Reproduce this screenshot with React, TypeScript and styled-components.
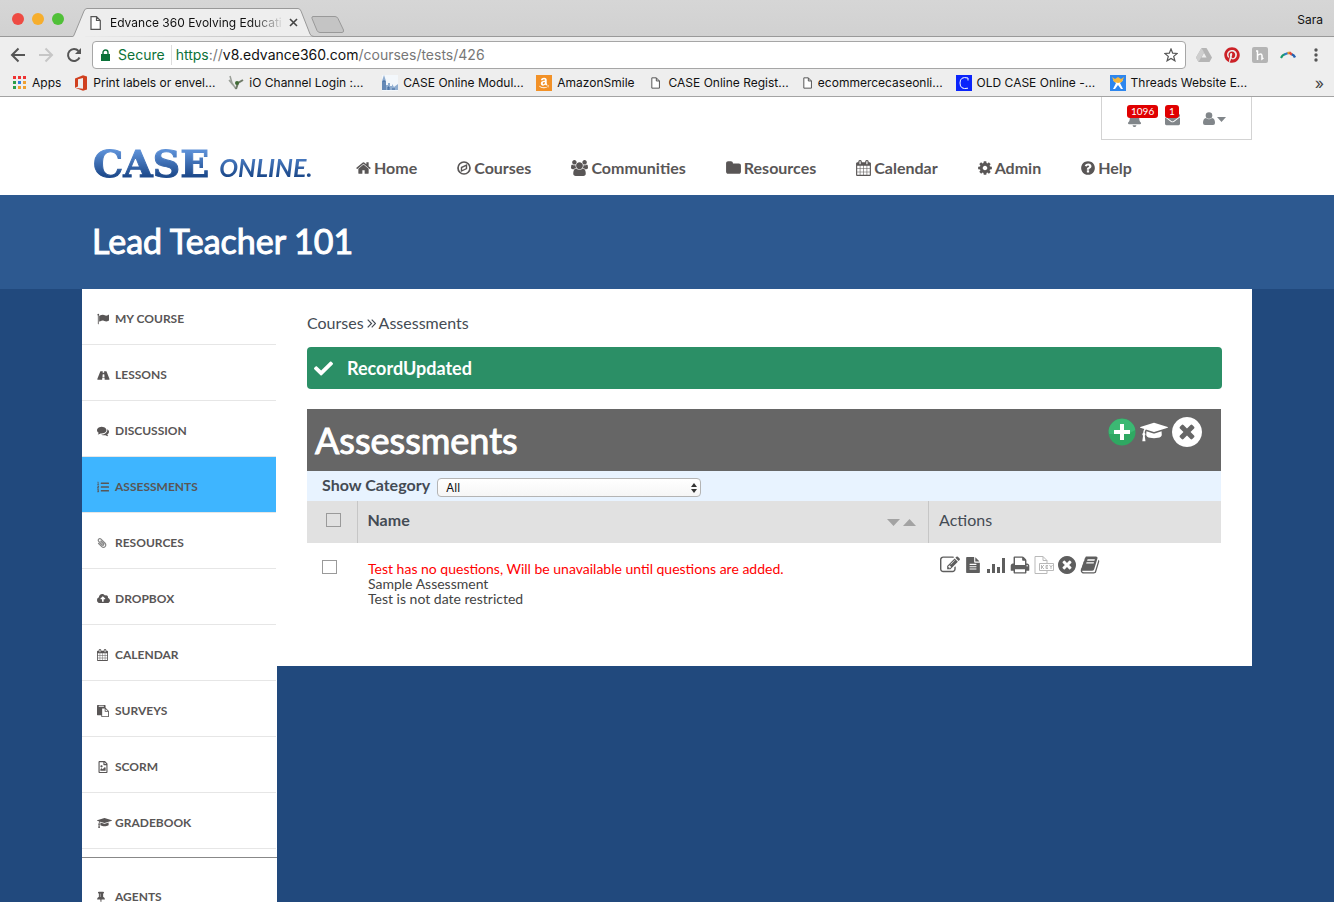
import React from "react";
import styled, { createGlobalStyle, css } from "styled-components";
import { FaListOl, FaPaperclip, FaCloudUploadAlt, FaRegFileImage, FaCheck, FaBell, FaEnvelope, FaPinterest, FaAmazon } from "react-icons/fa";

const GlobalStyle = createGlobalStyle`
  *, *::before, *::after { box-sizing: border-box; }
  body { margin: 0; background: #21497d; font-family: Lato, sans-serif; color: #444b54; }
  h1, h2, p, ul { margin: 0; padding: 0; }
  ul { list-style: none; }
  a { color: inherit; text-decoration: none; }
  button { border: 0; padding: 0; background: none; font: inherit; color: inherit; }
`;

/* Semi-bold headings: the regular cut, thickened by a thin outline of its own colour. */
const thick = css`
  font-weight: 400;
  -webkit-text-stroke: 1px currentColor;
`;

/* ---------- icons ---------- */

const paths = {
  home: "M1472 992v480q0 26-19 45t-45 19h-384v-384h-256v384h-384q-26 0-45-19t-19-45v-480q0-1 .5-3t.5-3l575-474 575 474q1 2 1 6zm223-69l-62 74q-8 9-21 11h-3q-13 0-21-7l-692-577-692 577q-12 8-24 7-13-2-21-11l-62-74q-8-10-7-23.5t11-21.5l719-599q32-26 76-26t76 26l244 204v-195q0-14 9-23t23-9h192q14 0 23 9t9 23v408l219 182q10 8 11 21.5t-7 23.5z",
  users: "M529 896q-162 5-265 128h-134q-82 0-138-40.5t-56-118.5q0-353 124-353 6 0 43.5 21t97.5 42.5 119 21.5q67 0 133-23-5 37-5 66 0 139 81 256zm1071 637q0 120-73 189.5t-194 69.5h-874q-121 0-194-69.5t-73-189.5q0-53 3.5-103.5t14-109 26.5-108.5 43-97.5 62-81 85.5-53.5 111.5-20q10 0 43 21.5t73 48 107 48 135 21.5 135-21.5 107-48 73-48 43-21.5q61 0 111.5 20t85.5 53.5 62 81 43 97.5 26.5 108.5 14 109 3.5 103.5zm-1024-1277q0 106-75 181t-181 75-181-75-75-181 75-181 181-75 181 75 75 181zm704 384q0 159-112.5 271.5t-271.5 112.5-271.5-112.5-112.5-271.5 112.5-271.5 271.5-112.5 271.5 112.5 112.5 271.5zm576 225q0 78-56 118.5t-138 40.5h-134q-103-123-265-128 81-117 81-256 0-29-5-66 66 23 133 23 59 0 119-21.5t97.5-42.5 43.5-21q124 0 124 353zm-128-609q0 106-75 181t-181 75-181-75-75-181 75-181 181-75 181 75 75 181z",
  folder: "M1728 608v704q0 92-66 158t-158 66h-1216q-92 0-158-66t-66-158v-960q0-92 66-158t158-66h320q92 0 158 66t66 158v32h672q92 0 158 66t66 158z",
  calendar: "M192 1664h288v-288h-288v288zm352 0h320v-288h-320v288zm-352-352h288v-320h-288v320zm352 0h320v-320h-320v320zm-352-384h288v-288h-288v288zm736 736h320v-288h-320v288zm-384-736h320v-288h-320v288zm768 736h288v-288h-288v288zm-384-352h320v-320h-320v320zm-352-864v-288q0-13-9.5-22.5t-22.5-9.5h-64q-13 0-22.5 9.5t-9.5 22.5v288q0 13 9.5 22.5t22.5 9.5h64q13 0 22.5-9.5t9.5-22.5zm736 864h288v-320h-288v320zm-384-384h320v-288h-320v288zm384 0h288v-288h-288v288zm32-480v-288q0-13-9.5-22.5t-22.5-9.5h-64q-13 0-22.5 9.5t-9.5 22.5v288q0 13 9.5 22.5t22.5 9.5h64q13 0 22.5-9.5t9.5-22.5zm384-64v1280q0 52-38 90t-90 38h-1408q-52 0-90-38t-38-90v-1280q0-52 38-90t90-38h128v-96q0-66 47-113t113-47h64q66 0 113 47t47 113v96h384v-96q0-66 47-113t113-47h64q66 0 113 47t47 113v96h128q52 0 90 38t38 90z",
  cog: "M1152 896q0-106-75-181t-181-75-181 75-75 181 75 181 181 75 181-75 75-181zm512-109v222q0 12-8 23t-20 13l-185 28q-19 54-39 91 35 50 107 138 10 12 10 25t-9 23q-27 37-99 108t-94 71q-12 0-26-9l-138-108q-44 23-91 38-16 136-29 186-7 28-36 28h-222q-14 0-24.5-8.5t-11.5-21.5l-28-184q-49-16-90-37l-141 107q-10 9-25 9-14 0-25-11-126-114-165-168-7-10-7-23 0-12 8-23 15-21 51-66.5t54-70.5q-27-50-41-99l-183-27q-13-2-21-12.5t-8-23.5v-222q0-12 8-23t19-13l186-28q14-46 39-92-40-57-107-138-10-12-10-24 0-10 9-23 26-36 98.5-107.5t94.5-71.5q13 0 26 10l138 107q44-23 91-38 16-136 29-186 7-28 36-28h222q14 0 24.5 8.5t11.5 21.5l28 184q49 16 90 37l142-107q9-9 24-9 13 0 25 10 129 119 165 170 7 8 7 22 0 12-8 23-15 21-51 66.5t-54 70.5q26 50 41 98l183 28q13 2 21 12.5t8 23.5z",
  help: "M1024 1376v-192q0-14-9-23t-23-9h-192q-14 0-23 9t-9 23v192q0 14 9 23t23 9h192q14 0 23-9t9-23zm256-672q0-88-55.5-163t-138.5-116-170-41q-243 0-371 213-15 24 8 42l132 100q7 6 19 6 16 0 25-12 53-68 86-92 34-24 86-24 48 0 85.5 26t37.5 59q0 38-20 61t-68 45q-63 28-115.5 86.5t-52.5 125.5v36q0 14 9 23t23 9h192q14 0 23-9t9-23q0-19 21.5-49.5t54.5-49.5q32-18 49-28.5t46-35 44.5-48 28-60.5 12.5-81zm384 192q0 209-103 385.5t-279.5 279.5-385.5 103-385.5-103-279.5-279.5-103-385.5 103-385.5 279.5-279.5 385.5-103 385.5 103 279.5 279.5 103 385.5z",
  flag: "M320 256q0 72-64 110v1266q0 13-9.5 22.5t-22.5 9.5h-64q-13 0-22.5-9.5t-9.5-22.5v-1266q-64-38-64-110 0-53 37.5-90.5t90.5-37.5 90.5 37.5 37.5 90.5zm1472 64v763q0 25-12.5 38.5t-39.5 27.5q-215 116-369 116-61 0-123.5-22t-108.5-48-115.5-48-142.5-22q-192 0-464 146-17 9-33 9-26 0-45-19t-19-45v-742q0-32 31-55 21-14 79-43 236-120 421-120 107 0 200 29t219 88q38 19 88 19 54 0 117.5-21t110-47 88-47 54.5-21q26 0 45 19t19 45z",
  road: "M1111 1151v-4l-24-320q-1-13-11-22.5t-23-9.5h-186q-13 0-23 9.5t-11 22.5l-24 320v4q-1 12 8 20t21 8h244q12 0 21-8t8-20zm746 377q0 72-46 72h-704q13 0 22-9.5t8-22.5l-20-256q-1-13-11-22.5t-23-9.5h-272q-13 0-23 9.5t-11 22.5l-20 256q-1 13 8 22.5t22 9.5h-704q-46 0-46-72 0-54 26-116l417-1044q8-19 26-33t38-14h339q-13 0-23 9.5t-11 22.5l-15 192q-1 14 8 23t22 9h166q13 0 22-9t8-23l-15-192q-1-13-11-22.5t-23-9.5h339q20 0 38 14t26 33l417 1044q26 62 26 116z",
  comments: "M1408 768q0 139-94 257t-256.5 186.5-353.5 68.5q-86 0-176-16-124 88-278 128-36 9-86 16h-3q-11 0-20.5-8t-11.5-21q-1-3-1-6.5t.5-6.5 2-6l2.5-5 3.5-5.5 4-5 4.5-5 4-4.5q5-6 23-25t26-29.5 22.5-29 25-38.5 20.5-44q-124-72-195-177t-71-224q0-139 94-257t256.5-186.5 353.5-68.5 353.5 68.5 256.5 186.5 94 257zm384 256q0 120-71 224.5t-195 176.5q10 24 20.5 44t25 38.5 22.5 29 26 29.5 23 25q1 1 4 4.5t4.5 5 4 5 3.5 5.5l2.5 5 2 6 .5 6.5-1 6.5q-3 14-13 22t-22 7q-50-7-86-16-154-40-278-128-90 16-176 16-271 0-472-132 58 4 88 4 161 0 309-45t264-129q125-92 192-212t67-254q0-77-23-152 129 71 204 178t75 230z",
  paste: "M768 1664h896v-640h-416q-40 0-68-28t-28-68v-416h-384v1152zm256-1440v-64q0-13-9.5-22.5t-22.5-9.5h-704q-13 0-22.5 9.5t-9.5 22.5v64q0 13 9.5 22.5t22.5 9.5h704q13 0 22.5-9.5t9.5-22.5zm256 672h299l-299-299v299zm512 128v672q0 40-28 68t-68 28h-960q-40 0-68-28t-28-68v-160h-544q-40 0-68-28t-28-68v-1344q0-40 28-68t68-28h1088q40 0 68 28t28 68v328q21 13 36 28l408 408q28 28 48 76t20 88z",
  cap: "M1774 836l18 316q4 69-82 128t-235 93.5-323 34.5-323-34.5-235-93.5-82-128l18-316 574 181q22 7 48 7t48-7zm530-324q0 23-22 31l-1120 352q-4 1-10 1t-10-1l-652-206q-43 34-71 111.5t-34 178.5q63 36 63 109 0 69-58 107l58 433q2 14-8 25-9 11-24 11h-192q-15 0-24-11-10-11-8-25l58-433q-58-38-58-107 0-73 65-111 11-207 98-330l-333-104q-22-8-22-31t22-31l1120-352q4-1 10-1t10 1l1120 352q22 8 22 31z",
  pin: "M800 864v-448q0-14-9-23t-23-9-23 9-9 23v448q0 14 9 23t23 9 23-9 9-23zm672 352q0 26-19 45t-45 19h-429l-51 483q-2 12-10.5 20.5t-20.5 8.5h-1q-27 0-32-27l-76-485h-404q-26 0-45-19t-19-45q0-123 78.5-221.5t177.5-98.5v-512q-52 0-90-38t-38-90 38-90 90-38h640q52 0 90 38t38 90-38 90-90 38v512q99 0 177.5 98.5t78.5 221.5z",
  edit: "M888 1184l116-116-152-152-116 116v56h96v96h56zm440-720q-16-16-33 1l-350 350q-17 17-1 33t33-1l350-350q17-17 1-33zm80 594v190q0 119-84.5 203.5t-203.5 84.5h-832q-119 0-203.5-84.5t-84.5-203.5v-832q0-119 84.5-203.5t203.5-84.5h832q63 0 117 25 15 7 18 23 3 17-9 29l-49 49q-14 14-32 8-23-6-45-6h-832q-66 0-113 47t-47 113v832q0 66 47 113t113 47h832q66 0 113-47t47-113v-126q0-13 9-22l64-64q15-15 35-7t20 29zm-96-738l288 288-672 672h-288v-288zm444 132l-92 92-288-288 92-92q28-28 68-28t68 28l152 152q28 28 28 68t-28 68z",
  times: "M1277 1122q0-26-19-45l-181-181 181-181q19-19 19-45 0-27-19-46l-90-90q-19-19-46-19-26 0-45 19l-181 181-181-181q-19-19-45-19-27 0-46 19l-90 90q-19 19-19 46 0 26 19 45l181 181-181 181q-19 19-19 45 0 27 19 46l90 90q19 19 46 19 26 0 45-19l181-181 181 181q19 19 45 19 27 0 46-19l90-90q19-19 19-46zm387-226q0 209-103 385.5t-279.5 279.5-385.5 103-385.5-103-279.5-279.5-103-385.5 103-385.5 279.5-279.5 385.5-103 385.5 103 279.5 279.5 103 385.5z",
  fileText: "M1596 476q14 14 28 36h-472v-472q22 14 36 28zm-476 164h544v1056q0 40-28 68t-68 28h-1344q-40 0-68-28t-28-68v-1600q0-40 28-68t68-28h800v544q0 40 28 68t68 28zm160 736v-64q0-14-9-23t-23-9h-704q-14 0-23 9t-9 23v64q0 14 9 23t23 9h704q14 0 23-9t9-23zm0-256v-64q0-14-9-23t-23-9h-704q-14 0-23 9t-9 23v64q0 14 9 23t23 9h704q14 0 23-9t9-23zm0-256v-64q0-14-9-23t-23-9h-704q-14 0-23 9t-9 23v64q0 14 9 23t23 9h704q14 0 23-9t9-23z",
  print: "M448 1536h896v-256h-896v256zm0-640h896v-384h-160q-40 0-68-28t-28-68v-160h-640v640zm1152 64q0-26-19-45t-45-19-45 19-19 45 19 45 45 19 45-19 19-45zm128 0v416q0 13-9.5 22.5t-22.5 9.5h-224v160q0 40-28 68t-68 28h-960q-40 0-68-28t-28-68v-160h-224q-13 0-22.5-9.5t-9.5-22.5v-416q0-79 56.5-135.5t135.5-56.5h64v-544q0-40 28-68t68-28h672q40 0 88 20t76 48l152 152q28 28 48 76t20 88v256h64q79 0 135.5 56.5t56.5 135.5z",
  book: "M1703 478q40 57 18 129l-275 906q-19 64-76.5 107.5t-122.5 43.5h-923q-77 0-148.5-53.5t-99.5-131.5q-24-67-2-127 0-4 3-27t4-37q1-8-3-21.5t-3-19.5q2-11 8-21t16.5-23.5 16.5-23.5q23-38 45-91.5t30-91.5q3-10 .5-30t-.5-28q3-11 17-28t17-23q21-36 42-92t25-90q1-9-2.5-32t.5-28q4-13 22-30.5t22-22.5q19-26 42.5-84.5t27.5-96.5q1-8-3-25.5t-2-26.5q2-8 9-18t18-23 17-21q8-12 16.5-30.5t15-35 16-36 19.5-32 26.5-23.5 36-11.5 47.5 5.5l-1 3q38-9 51-9h761q74 0 114 56t18 130l-274 906q-36 119-71.5 153.5t-128.5 34.5h-869q-27 0-38 15-11 16-1 43 24 70 144 70h923q29 0 56-15.5t35-41.5l300-987q7-22 5-57 38 15 59 43zm-1064 2q-4 13 2 22.5t20 9.5h608q13 0 25.5-9.5t16.5-22.5l21-64q4-13-2-22.5t-20-9.5h-608q-13 0-25.5 9.5t-16.5 22.5zm-83 256q-4 13 2 22.5t20 9.5h608q13 0 25.5-9.5t16.5-22.5l21-64q4-13-2-22.5t-20-9.5h-608q-13 0-25.5 9.5t-16.5 22.5z",
};

const boxes: Partial<Record<keyof typeof paths, [number, number]>> = {
  users: [-64, 1920],
  road: [0, 1920],
  cap: [0, 2304],
  home: [64, 1664],
  folder: [64, 1664],
  calendar: [64, 1664],
  cog: [128, 1536],
  help: [128, 1536],
  times: [128, 1536],
  pin: [320, 1152],
};

const Svg = styled.svg`
  display: block;
  flex: none;
  fill: currentColor;
`;

const Glyph = ({ name, size }: { name: keyof typeof paths; size: number }) => {
  const [x, w] = boxes[name] ?? [0, 1792];
  return (
    <Svg width={Math.round((size * w) / 1792)} height={size} viewBox={`${x} 0 ${w} 1792`} aria-hidden="true">
      <path d={paths[name]} />
    </Svg>
  );
};

const CompassIcon = () => (
  <Svg width="14" height="16" viewBox="0 0 14 16" aria-hidden="true">
    <circle cx="7" cy="8" r="6" fill="none" stroke="currentColor" strokeWidth="1.7" />
    <path fillRule="evenodd" d="M10.2 3.9v5L3.8 12.1V7zM8.8 6.3 5.2 8v2.1l3.6-1.8z" />
  </Svg>
);

const PageIcon = ({ w, h }: { w: number; h: number }) => (
  <Svg width={w} height={h} viewBox="0 0 11 14" aria-hidden="true">
    <path d="M1 .7h5.5L10.3 4.5v8.8H1zM6.500.7v3.8h3.8" fill="#fff" stroke="#555" strokeWidth="1.2" />
  </Svg>
);

/* ---------- browser window ---------- */

const Window = styled.div`
  display: flex;
  flex-direction: column;
  height: 100vh;
  overflow: hidden;
`;

const Chrome = styled.div`
  flex: none;
  font-family: Inter, sans-serif;
  color: #111;
  background: #eee;
  border-bottom: 1px solid #a3a3a3;
`;

const TabStrip = styled.div`
  display: flex;
  align-items: flex-end;
  height: 37px;
  padding: 0 11px 0 12px;
  background: linear-gradient(#d6d6d6, #d1d1d1);
  box-shadow: inset 0 -1px #999;
`;

const Lights = styled.div`
  display: flex;
  gap: 8px;
  padding-bottom: 12px;
`;

const Light = styled.button<{ $color: string }>`
  width: 12px;
  height: 12px;
  border-radius: 50%;
  background: ${(p) => p.$color};
`;

const Tab = styled.div`
  position: relative;
  display: flex;
  align-items: center;
  width: 243px;
  height: 29px;
  margin-left: 8px;
  padding: 0 17px 0 18px;
`;

const TabShape = styled.svg`
  position: absolute;
  inset: 0;
`;

const TabTitle = styled.span`
  position: relative;
  flex: 1;
  margin-left: 9px;
  white-space: nowrap;
  font-size: 12px;
  line-height: 16px;
  -webkit-mask-image: linear-gradient(to right, #000 80%, transparent);
  mask-image: linear-gradient(to right, #000 80%, transparent);
`;

const Layer = styled.span`
  position: relative;
  display: flex;
`;

const CloseTab = styled.button`
  position: relative;
  margin-left: 4px;
  display: flex;
`;

const NewTab = styled.button`
  margin-bottom: 4px;
  margin-left: -4px;
`;

const Profile = styled.span`
  margin-left: auto;
  padding-bottom: 9px;
  font-size: 12px;
  line-height: 16px;
`;

const Toolbar = styled.div`
  display: flex;
  align-items: center;
  height: 36px;
  padding: 0 10px;
  color: #555;
`;

const NavButton = styled.button<{ $off?: boolean }>`
  width: 28px;
  height: 20px;
  display: flex;
  align-items: center;
  color: ${(p) => (p.$off ? "#c6c6c6" : "#555")};
`;

const Address = styled.div`
  display: flex;
  align-items: center;
  flex: 1;
  height: 28px;
  margin-left: -2px;
  padding: 0 7px 0 8px;
  background: #fff;
  border: 1px solid #a6a6a6;
  border-radius: 4px;
  font-size: 14px;
`;

const Secure = styled.span`
  margin-left: 8px;
  padding-right: 6px;
  border-right: 1px solid #ddd;
  line-height: 20px;
  color: #0b7239;
`;

const Url = styled.div`
  flex: 1;
  margin-left: 4px;
  line-height: 20px;
  color: #777;
  b { font-weight: 400; color: #111; }
  i { font-style: normal; color: #0b7239; }
`;

const Extensions = styled.div`
  display: flex;
  align-items: center;
  gap: 12px;
  margin-left: 10px;
`;

const Bookmarks = styled.nav`
  display: flex;
  align-items: center;
  gap: 13px;
  height: 23px;
  padding: 0 10px 4px 11px;
  font-size: 12px;
`;

const Bookmark = styled.a<{ $cut?: boolean }>`
  display: flex;
  align-items: center;
  flex: none;
  gap: 5px;
  line-height: 16px;
  white-space: nowrap;
  ${(p) => p.$cut && css`width: 141px;`}
`;

const Favicon = styled.span`
  display: flex;
  justify-content: center;
  align-items: center;
  width: 16px;
  height: 16px;
`;

const More = styled.button`
  margin-left: auto;
  line-height: 16px;
  font-size: 16px;
  color: #444;
`;

/* ---------- site ---------- */

const Site = styled.div`
  flex: 1;
  min-height: 0;
  overflow: hidden;
  background: #21497d;
`;

const Container = styled.div`
  max-width: 1170px;
  margin: 0 auto;
`;

const Header = styled.header`
  background: #fff;
`;

const HeaderInner = styled(Container)`
  display: grid;
  grid-template-rows: 43px 55px;
`;

const UserBox = styled.div`
  justify-self: end;
  display: flex;
  align-items: center;
  gap: 22px;
  width: 151px;
  padding: 2px 25px 0;
  border: 1px solid #d3d3d3;
  border-top: 0;
  color: #81868a;
`;

const Notice = styled.button`
  position: relative;
  display: flex;
  width: 16px;
`;

const Badge = styled.span`
  position: absolute;
  left: 0;
  bottom: 9px;
  padding: 0 4px;
  border-radius: 3px;
  background: #e00000;
  color: #fff;
  font-size: 10px;
  line-height: 13px;
`;

const UserButton = styled.button`
  display: flex;
  align-items: center;
  gap: 2px;
`;

const MainNav = styled.nav`
  display: flex;
  align-items: center;
  gap: 40px;
  padding-left: 11px;
`;

const Logo = styled.a`
  display: flex;
  align-items: baseline;
  gap: 10px;
  width: 223px;
  height: 55px;
  color: transparent;
  background: linear-gradient(#5b8fd6 20%, #1d4a8c 65%);
  -webkit-background-clip: text;
  background-clip: text;
  -webkit-text-stroke: 1px transparent;
  font: bold 38px/48px "DejaVu Serif", serif;
  white-space: nowrap;
  small { font: italic bold 25px/48px Lato, sans-serif; -webkit-text-stroke: 0; }
`;

const NavLink = styled.a`
  display: flex;
  align-items: center;
  gap: 3px;
  font-size: 16px;
  line-height: 20px;
  font-weight: 700;
  color: #595656;
  white-space: nowrap;
`;

const Banner = styled.div`
  background: #2d5990;
`;

const CourseTitle = styled.h1`
  padding: 24px 10px 26px;
  font-size: 34px;
  line-height: 44px;
  ${thick}
  color: #fff;
`;

const Body = styled(Container)`
  display: flex;
  align-items: flex-start;
`;

const Sidebar = styled.nav`
  flex: none;
  width: 195px;
  background: #fff;
`;

const SideGroup = styled.ul`
  & + & {
    margin-top: 8px;
    padding-top: 9px;
    border-top: 1px solid #888;
  }
`;

const SideLink = styled.a<{ $active?: boolean }>`
  display: flex;
  align-items: center;
  height: 56px;
  margin-right: 1px;
  padding: 4px 0 0 15px;
  border-bottom: 1px solid #e6e6e6;
  background: ${(p) => (p.$active ? "#3eb5ff" : "#fff")};
  font-size: 12px;
  font-weight: 700;
  line-height: 16px;
  color: #595656;
`;

const SideIcon = styled.span<{ $flip?: boolean }>`
  display: flex;
  width: 18px;
  svg { flex: none; ${(p) => p.$flip && css`transform: scaleX(-1);`} }
`;

const Main = styled.main`
  flex: 1;
  min-width: 0;
  padding: 24px 30px 50px;
  background: #fff;
`;

const Crumbs = styled.div`
  display: flex;
  align-items: center;
  gap: 3px;
  margin-bottom: 14px;
  font-size: 16px;
  line-height: 20px;
`;

const Alert = styled.div`
  display: flex;
  align-items: center;
  gap: 14px;
  height: 42px;
  margin-bottom: 20px;
  padding: 0 7px;
  border-radius: 4px;
  background: #2b8f66;
  color: #fff;
  font-size: 18px;
  font-weight: 700;
`;

const Panel = styled.section`
  margin-right: 1px;
`;

const PanelHead = styled.div`
  display: flex;
  justify-content: space-between;
  height: 62px;
  padding: 8px 19px 0 8px;
  background: #666;
  color: #fff;
`;

const PanelTitle = styled.h2`
  font-size: 36px;
  line-height: 46px;
  ${thick}
`;

const PanelTools = styled.div`
  display: flex;
  align-items: center;
  gap: 4px;
  height: 30px;
`;

const IconButton = styled.button`
  display: flex;
`;

const Filter = styled.div`
  display: flex;
  gap: 7px;
  height: 30px;
  padding-left: 15px;
  background: #e8f3ff;
  font-size: 16px;
  line-height: 28px;
  font-weight: 700;
`;

const SelectWrap = styled.span`
  position: relative;
  display: flex;
  align-self: center;
  margin-top: 2px;
  svg { position: absolute; right: 4px; top: 5px; }
`;

const Select = styled.select`
  appearance: none;
  width: 264px;
  height: 19px;
  padding: 0 8px;
  border: 1px solid #b4b4b4;
  border-radius: 4px;
  background: linear-gradient(#fff, #f6f6f6);
  font-family: Inter, sans-serif;
  font-size: 12px;
  color: #111;
`;

const Table = styled.table`
  width: 100%;
  border-collapse: collapse;
  table-layout: fixed;
  text-align: left;
`;

const Th = styled.th<{ $w?: string; $strong?: boolean }>`
  width: ${(p) => p.$w ?? "auto"};
  height: 42px;
  padding: 0 10px 5px;
  background: #e1e1e1;
  font-size: 16px;
  font-weight: ${(p) => (p.$strong ? 700 : 400)};
  & + & { border-left: 1px solid #c6c6c6; }
`;

const Split = styled.div`
  display: flex;
  align-items: center;
  justify-content: space-between;
  svg { margin-top: 4px; }
`;

const Td = styled.td`
  padding: 16px 11px 0;
  vertical-align: top;
  font-size: 14px;
  line-height: 15px;
  color: #444;
`;

const NameCell = styled(Td)`
  padding-top: 18px;
  padding-bottom: 10px;
`;

const Warning = styled.p`
  color: #f00;
`;

const Check = styled.input<{ $head?: boolean }>`
  appearance: none;
  display: block;
  width: 15px;
  height: 14px;
  margin: ${(p) => (p.$head ? "0 0 0 9px" : "1px 0 0 4px")};
  border: 1px solid #9a9a9a;
  background: transparent;
`;

const Actions = styled.div`
  display: flex;
  align-items: center;
  gap: 4px;
  height: 20px;
  margin-top: -4px;
  color: #5e5e5e;
`;

const navItems: { label: string; icon: React.ReactNode }[] = [
  { label: "Home", icon: <Glyph name="home" size={16} /> },
  { label: "Courses", icon: <CompassIcon /> },
  { label: "Communities", icon: <Glyph name="users" size={16} /> },
  { label: "Resources", icon: <Glyph name="folder" size={16} /> },
  { label: "Calendar", icon: <Glyph name="calendar" size={16} /> },
  { label: "Admin", icon: <Glyph name="cog" size={16} /> },
  { label: "Help", icon: <Glyph name="help" size={16} /> },
];

const sideItems: { label: string; icon: React.ReactNode; active?: boolean; flip?: boolean }[] = [
  { label: "MY COURSE", icon: <Glyph name="flag" size={12} /> },
  { label: "LESSONS", icon: <Glyph name="road" size={12} /> },
  { label: "DISCUSSION", icon: <Glyph name="comments" size={12} /> },
  { label: "ASSESSMENTS", icon: <FaListOl size={12} />, active: true },
  { label: "RESOURCES", icon: <FaPaperclip size={10} color="#858585" />, flip: true },
  { label: "DROPBOX", icon: <FaCloudUploadAlt size={13} /> },
  { label: "CALENDAR", icon: <Glyph name="calendar" size={12} /> },
  { label: "SURVEYS", icon: <Glyph name="paste" size={12} /> },
  { label: "SCORM", icon: <FaRegFileImage size={12} /> },
  { label: "GRADEBOOK", icon: <Glyph name="cap" size={12} /> },
];

const bookmarks: { label: string; icon: React.ReactNode; cut?: boolean }[] = [
  {
    label: "Apps",
    icon: (
      <Svg width="13" height="13" viewBox="0 0 13 13">
        {["#e33", "#e33", "#e33", "#2a9d4a", "#2f7de1", "#f0a030", "#2a9d4a", "#f0a030", "#f0a030"].map((c, i) => (
          <rect key={i} x={(i % 3) * 5} y={Math.floor(i / 3) * 5} width="3" height="3" fill={c} />
        ))}
      </Svg>
    ),
  },
  {
    label: "Print labels or envel...",
    cut: true,
    icon: (
      <Svg width="14" height="16" viewBox="0 0 14 16">
        <path d="M1 3.500 9 .3l4 1.200v13L9 15.700 1 12.800l8 1V3L4 4.300v7.200l-3 1.300z" fill="#d0401f" />
      </Svg>
    ),
  },
  {
    label: "iO Channel Login :...",
    cut: true,
    icon: (
      <Svg width="16" height="16" viewBox="0 0 16 16">
        <path d="M2 1l2 7 4 6M1 5l4 5" fill="none" stroke="#9a9f98" strokeWidth="1.5" />
        <path d="M15 5l-5 3-2 6" fill="none" stroke="#6f7a68" strokeWidth="2" />
        <circle cx="9" cy="8" r="2" fill="#3f6b35" />
      </Svg>
    ),
  },
  {
    label: "CASE Online Modul...",
    cut: true,
    icon: (
      <Svg width="16" height="16" viewBox="0 0 16 16">
        <rect width="16" height="16" fill="#f3f7fb" />
        <path d="M0 15V6l2-6 2 6v4h2V8h2v3h2V9l2 3 4-3v6z" fill="#8fadd0" />
        <path d="M1 15V6h2v9M6 15v-3h1v3M10 14h3" fill="none" stroke="#3c669c" />
      </Svg>
    ),
  },
  {
    label: "AmazonSmile",
    icon: (
      <Svg width="16" height="16" viewBox="0 0 16 16">
        <rect width="16" height="16" fill="#f29127" />
        <FaAmazon x={2} y={2} size={12} color="#fff" />
      </Svg>
    ),
  },
  { label: "CASE Online Regist...", cut: true, icon: <PageIcon w={9} h={12} /> },
  { label: "ecommercecaseonli...", cut: true, icon: <PageIcon w={9} h={12} /> },
  {
    label: "OLD CASE Online -...",
    cut: true,
    icon: (
      <Svg width="16" height="16" viewBox="0 0 16 16">
        <rect width="16" height="16" fill="#0b24fb" />
        <path d="M12 5.500V3Q4 1 4 8t8 5.200" fill="none" stroke="#fff" />
      </Svg>
    ),
  },
  {
    label: "Threads Website E...",
    cut: true,
    icon: (
      <Svg width="16" height="16" viewBox="0 0 16 16">
        <rect width="16" height="16" fill="#2d86ee" />
        <path d="M3 14 6 8 3 5h10l-3 3 3 6h-2L8 10l-3 4z" fill="#fff" />
        <path d="M2 2l3 2 3-2 3 2 3-2-2 5-4 1-4-1z" fill="#f4b63c" />
      </Svg>
    ),
  },
];

const BrowserChrome = () => (
  <Chrome>
    <TabStrip>
      <Lights>
        <Light $color="#ee4b43" aria-label="Close window" />
        <Light $color="#f6ae2d" aria-label="Minimize" />
        <Light $color="#50c038" aria-label="Zoom" />
      </Lights>
      <Tab>
        <TabShape width="243" height="29" viewBox="0 0 243 29" aria-hidden="true">
          <path d="M0 29Q1.500 29 2.500 26L12 3Q13 .5 15 .5H226Q228 .5 229 3L238 26Q239 28.500 242 28.500" fill="#eee" stroke="#999" />
        </TabShape>
        <Layer><PageIcon w={11} h={14} /></Layer>
        <TabTitle>Edvance 360 Evolving Educati</TabTitle>
        <CloseTab aria-label="Close tab">
          <Svg width="9" height="9" viewBox="0 0 9 9"><path d="M1 1l7 7M8 1 1 8" stroke="#444" strokeWidth="1.6" /></Svg>
        </CloseTab>
      </Tab>
      <NewTab aria-label="New tab">
        <Svg width="34" height="17" viewBox="0 0 34 17">
          <path d="M2 .5H24Q26 .5 27 2.500L32.500 14Q33 16.500 31 16.500H9Q7 16.500 6 14.500L1 2.500Q.5 .5 2 .5z" fill="#c4c4c4" stroke="#999" />
        </Svg>
      </NewTab>
      <Profile>Sara</Profile>
    </TabStrip>
    <Toolbar>
      <NavButton aria-label="Back">
        <Svg width="16" height="16" viewBox="0 0 16 16"><path d="M15 8H2.500M8.500 1.500 2 8l6.500 6.500" fill="none" stroke="currentColor" strokeWidth="2" /></Svg>
      </NavButton>
      <NavButton $off aria-label="Forward">
        <Svg width="16" height="16" viewBox="0 0 16 16"><path d="M1 8h12.500M7.500 1.500 14 8l-6.500 6.500" fill="none" stroke="currentColor" strokeWidth="2" /></Svg>
      </NavButton>
      <NavButton aria-label="Reload">
        <Svg width="16" height="16" viewBox="0 0 16 16">
          <path d="M13.500 10.500A6 6 0 1 1 12.500 4" fill="none" stroke="currentColor" strokeWidth="2" />
          <path d="M15 1v6H9z" />
        </Svg>
      </NavButton>
      <Address>
        <Svg width="9" height="12" viewBox="0 0 9 12" color="#0b7239">
          <path d="M0 5h9v7H0z" />
          <path d="M2 5V3.500a2.500 2.500 0 0 1 5 0V5" fill="none" stroke="currentColor" strokeWidth="1.4" />
        </Svg>
        <Secure>Secure</Secure>
        <Url><i>https</i>://<b>v8.edvance360.com</b>/courses/tests/426</Url>
        <Svg width="14" height="14" viewBox="0 0 14 14">
          <path d="M7 1l1.700 4.200 4.500.3-3.500 2.900 1.200 4.400L7 10.400l-3.900 2.400 1.200-4.400L.8 5.500l4.500-.3z" fill="none" stroke="#555" strokeWidth="1.2" />
        </Svg>
      </Address>
      <Extensions>
        <Svg width="16" height="14" viewBox="0 0 16 14">
          <path d="M5.500 0h5L16 9.500 13.500 14h-11L0 9.500z" fill="#b5b5b5" />
          <path d="M5.500 0 8 4.500 2.500 14 0 9.500z" fill="#cecece" />
          <path d="M8 5l2.500 4.500h-5z" fill="#eee" />
        </Svg>
        <FaPinterest size={16} color="#cc2127" />
        <Svg width="16" height="16" viewBox="0 0 16 16">
          <rect width="16" height="16" rx="2" fill="#b4b4b4" />
          <path d="M5.500 13V3.500M4 4h2M5.500 8.500q4-3 4.500 0V12l1.500-1" fill="none" stroke="#fff" strokeWidth="1.5" />
        </Svg>
        <Svg width="16" height="8" viewBox="0 0 16 8">
          <path d="M1 7Q2.500 3.500 5 3.200" fill="none" stroke="#1a9a70" strokeWidth="2" />
          <path d="M4.500 3.500 8 2" fill="none" stroke="#2e78c8" strokeWidth="2" />
          <path d="M7.500 2.200 10 1.800" fill="none" stroke="#e8a02c" strokeWidth="2.4" />
          <path d="M9.500 1.500 12 3.800" fill="none" stroke="#e24c3a" strokeWidth="2.4" />
          <path d="M11.800 3.400Q14 4 15 6.500" fill="none" stroke="#2461b0" strokeWidth="2.4" />
        </Svg>
        <Svg width="16" height="14" viewBox="0 0 16 14">
          <circle cx="8" cy="2" r="1.7" /><circle cx="8" cy="7" r="1.7" /><circle cx="8" cy="12" r="1.7" />
        </Svg>
      </Extensions>
    </Toolbar>
    <Bookmarks>
      {bookmarks.map((b) => (
        <Bookmark key={b.label} href="#" $cut={b.cut}>
          <Favicon>{b.icon}</Favicon>
          {b.label}
        </Bookmark>
      ))}
      <More aria-label="More bookmarks">»</More>
    </Bookmarks>
  </Chrome>
);

const SideItem = ({ label, icon, active, flip }: (typeof sideItems)[number]) => (
  <li>
    <SideLink href="#" $active={active}>
      <SideIcon $flip={flip}>{icon}</SideIcon>
      {label}
    </SideLink>
  </li>
);

export default function App() {
  return (
    <Window>
      <GlobalStyle />
      <BrowserChrome />
      <Site>
        <Header>
          <HeaderInner>
            <UserBox>
              <Notice aria-label="Notifications"><FaBell size={15} /><Badge>1096</Badge></Notice>
              <Notice aria-label="Messages"><FaEnvelope size={15} /><Badge>1</Badge></Notice>
              <UserButton aria-label="Account">
                <Svg width="12" height="14" viewBox="0 0 12 14">
                  <circle cx="6" cy="3.5" r="3.3" />
                  <path d="M3 6q3 2.500 6 0 3 .5 3 5 0 2-2 2H2q-2 0-2-2 0-4.500 3-5z" />
                </Svg>
                <Svg width="9" height="5" viewBox="0 0 9 5"><path d="M0 0h9L4.500 5z" /></Svg>
              </UserButton>
            </UserBox>
            <MainNav>
              <Logo href="#">CASE<small>ONLINE.</small></Logo>
              {navItems.map((n) => (
                <NavLink key={n.label} href="#">{n.icon}{n.label}</NavLink>
              ))}
            </MainNav>
          </HeaderInner>
        </Header>
        <Banner>
          <Container><CourseTitle>Lead Teacher 101</CourseTitle></Container>
        </Banner>
        <Body>
          <Sidebar>
            <SideGroup>
              {sideItems.map((s) => <SideItem key={s.label} {...s} />)}
            </SideGroup>
            <SideGroup>
              <SideItem label="AGENTS" icon={<Glyph name="pin" size={12} />} />
            </SideGroup>
          </Sidebar>
          <Main>
            <Crumbs>
              <a href="#">Courses</a>
              <Svg width="9" height="9" viewBox="0 0 9 9"><path d="M.7.7 4.500 4.500.7 8.300M4.700.7l3.800 3.800-3.800 3.800" fill="none" stroke="currentColor" strokeWidth="1.2" /></Svg>
              <span>Assessments</span>
            </Crumbs>
            <Alert role="status"><FaCheck size={19} />RecordUpdated</Alert>
            <Panel>
              <PanelHead>
                <PanelTitle>Assessments</PanelTitle>
                <PanelTools>
                  <IconButton aria-label="Add assessment">
                    <Svg width="28" height="28" viewBox="0 0 28 28">
                      <circle cx="14" cy="14" r="13.5" fill="#2fa862" />
                      <path d="M.7 12A13.500 13.500 0 0 1 27.300 12L20 16H1z" fill="#3cb873" />
                      <path d="M12 6h4v6h6v4h-6v6h-4v-6H6v-4h6z" fill="#fff" />
                    </Svg>
                  </IconButton>
                  <IconButton aria-label="Gradebook"><Glyph name="cap" size={22} /></IconButton>
                  <IconButton aria-label="Close">
                    <Svg width="30" height="30" viewBox="128 128 1536 1536"><path d={paths.times} /></Svg>
                  </IconButton>
                </PanelTools>
              </PanelHead>
              <Filter>
                <label htmlFor="category">Show Category</label>
                <SelectWrap>
                  <Select id="category" defaultValue="All"><option>All</option></Select>
                  <Svg width="6" height="10" viewBox="0 0 6 10" color="#333"><path d="M3 0l3 4H0zM3 10l3-4H0z" /></Svg>
                </SelectWrap>
              </Filter>
              <Table>
                <thead>
                  <tr>
                    <Th $w="50px"><Check $head type="checkbox" aria-label="Select all" /></Th>
                    <Th $strong>
                      <Split>
                        Name
                        <Svg width="31" height="8" viewBox="0 0 31 8" color="#a3a3a3"><path d="M0 1h13L6.500 8zM16 8h13L22.500 1z" /></Svg>
                      </Split>
                    </Th>
                    <Th $w="32%">Actions</Th>
                  </tr>
                </thead>
                <tbody>
                  <tr>
                    <Td><Check type="checkbox" aria-label="Select Sample Assessment" /></Td>
                    <NameCell>
                      <Warning>Test has no questions, Will be unavailable until questions are added.</Warning>
                      <p>Sample Assessment</p>
                      <p>Test is not date restricted</p>
                    </NameCell>
                    <Td>
                      <Actions>
                        <IconButton aria-label="Edit"><Glyph name="edit" size={20} /></IconButton>
                        <IconButton aria-label="Details">
                          <Svg width="18" height="16" viewBox="0 0 1792 1792"><path d={paths.fileText} /></Svg>
                        </IconButton>
                        <IconButton aria-label="Statistics">
                          <Svg width="20" height="16" viewBox="0 0 20 16"><path d="M1 12h3v4H1zM6 7h3v9H6zM11 10h3v6h-3zM16 1h3v15h-3z" /></Svg>
                        </IconButton>
                        <IconButton aria-label="Print"><Glyph name="print" size={20} /></IconButton>
                        <IconButton aria-label="Answer key">
                          <Svg width="20" height="18" viewBox="0 0 20 18" stroke="#b9b9b9">
                            <path d="M13 7V4.500L9 .5H1v17h12V15M9 .5v4h4" fill="none" />
                            <path d="M5.500 7.500h14v7h-14z" fill="#fff" />
                            <path d="M7.500 9v4M10 9 8 11l2 2M14 9.500h-2v3h2M12 11h2M15.500 9 17 11v2M18.500 9 17 11" fill="none" />
                          </Svg>
                        </IconButton>
                        <IconButton aria-label="Delete">
                          <Svg width="18" height="18" viewBox="128 128 1536 1536"><path d={paths.times} /></Svg>
                        </IconButton>
                        <IconButton aria-label="Gradebook entry"><Glyph name="book" size={20} /></IconButton>
                      </Actions>
                    </Td>
                  </tr>
                </tbody>
              </Table>
            </Panel>
          </Main>
        </Body>
      </Site>
    </Window>
  );
}
